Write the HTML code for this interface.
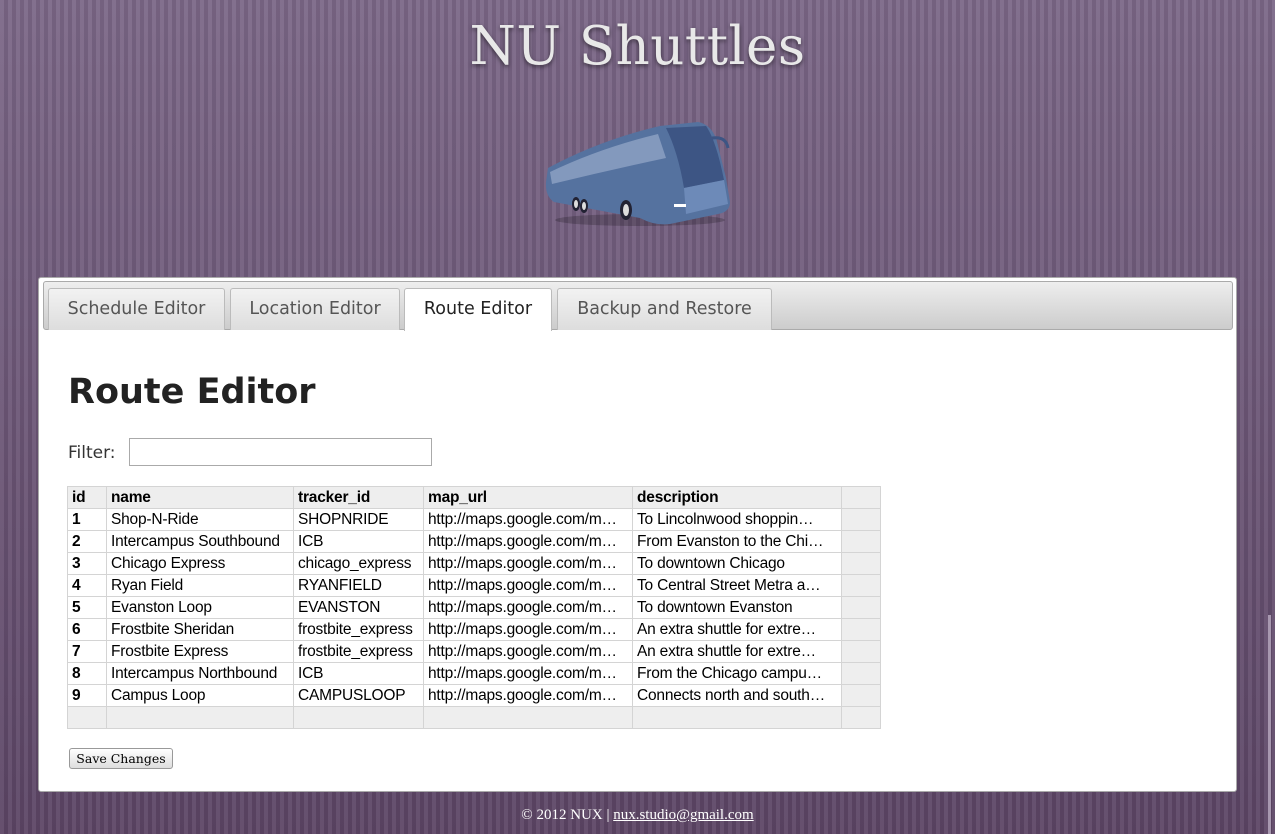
<!DOCTYPE html>
<html><head><meta charset="utf-8"><style>
*{box-sizing:border-box}
html,body{margin:0;padding:0}
body{width:1275px;height:834px;overflow:hidden;position:relative;
background:repeating-linear-gradient(90deg,rgba(255,255,255,0.06) 0 4px,rgba(0,0,0,0.06) 4px 8px),linear-gradient(#7b6787,#5c4565);
font-family:"Liberation Sans",sans-serif}
.title{position:absolute;top:16px;left:0;width:1275px;text-align:center;font-family:"DejaVu Serif","Liberation Serif",serif;font-size:53px;color:#e8e8e8;text-shadow:0 2px 4px rgba(0,0,0,.5);letter-spacing:0.5px}
.panel{position:absolute;left:38px;top:277px;width:1199px;height:515px;background:#fff;border:1px solid #aaa;border-radius:3px}
.tabbar{position:absolute;left:4px;top:3px;width:1190px;height:49px;background:linear-gradient(#eee,#ccc);border:1px solid #aaa;border-radius:3px}
.tab{position:absolute;top:6px;height:42px;background:linear-gradient(#f2f2f2,#ddd);border:1px solid #bbb;border-bottom:none;border-radius:3px 3px 0 0;font-family:"DejaVu Sans",sans-serif;font-size:17.5px;color:#555;text-align:center;line-height:40px}
.tab.a{background:#fff;color:#222;height:43px}
h1{position:absolute;left:29px;top:94px;margin:0;font-family:"DejaVu Sans",sans-serif;font-weight:bold;font-size:35px;color:#222}
.flt{position:absolute;left:29px;top:165px;font-family:"DejaVu Sans",sans-serif;font-size:17px;color:#333}
.inp{position:absolute;left:90px;top:160px;width:303px;height:28px;border:1px solid #aaa}
table{position:absolute;left:28px;top:208px;border-collapse:collapse;font-size:15.5px;color:#000;table-layout:fixed}
td{border:1px solid #d4d4d4;height:22px;padding:0 4px;white-space:nowrap;overflow:hidden;letter-spacing:-0.2px}
tr.h td{background:#eee;font-weight:bold}
td.g{background:#eee}
.btn{position:absolute;left:30px;top:470px;width:104px;height:21px;border:1px solid #999;border-radius:3px;background:linear-gradient(#fff,#ddd);font-family:"DejaVu Serif",serif;font-size:12.5px;text-align:center;line-height:19px}
.foot{position:absolute;top:807px;left:0;width:1275px;text-align:center;color:#fff;font-family:"Liberation Serif",serif;font-size:15px}
.foot u{color:#fff}
.sb{position:absolute;left:1268px;top:615px;width:3px;height:219px;background:#a898b0}
</style></head><body>
<div class="title">NU Shuttles</div>
<svg style="position:absolute;left:540px;top:118px" width="200" height="112" viewBox="0 0 200 112">
<ellipse cx="100" cy="102" rx="85" ry="6" fill="rgba(0,0,0,0.2)"/>
<path d="M8 50 Q60 22 120 8 L158 4 Q170 6 176 20 L186 60 L190 84 Q190 94 178 96 L130 106 Q115 108 100 100 L14 84 Q5 78 6 64Z" fill="#55729f"/>
<path d="M10 54 Q60 30 118 16 L126 40 Q70 52 12 66Z" fill="#8ea2c4" opacity=".8"/>
<path d="M126 10 L166 8 Q176 22 184 62 L144 70 Q138 34 126 10Z" fill="#3d5584"/>
<path d="M144 70 L184 62 L188 86 L146 96Z" fill="#6d8ab8"/>
<ellipse cx="36" cy="86" rx="4" ry="7" fill="#223"/><ellipse cx="36" cy="86" rx="2" ry="4" fill="#ddd"/>
<ellipse cx="44" cy="88" rx="4" ry="7" fill="#223"/><ellipse cx="44" cy="88" rx="2" ry="4" fill="#ddd"/>
<ellipse cx="86" cy="92" rx="6" ry="10" fill="#223"/><ellipse cx="86" cy="92" rx="3" ry="6" fill="#ddd"/>
<rect x="134" y="86" width="12" height="3" fill="#fff"/>
<path d="M172 20 Q186 18 188 30" stroke="#3d5584" stroke-width="3" fill="none"/>
</svg>
<div class="panel">
<div class="tabbar">
<div class="tab" style="left:4px;width:177px">Schedule Editor</div>
<div class="tab" style="left:186px;width:170px">Location Editor</div>
<div class="tab a" style="left:360px;width:148px">Route Editor</div>
<div class="tab" style="left:513px;width:215px">Backup and Restore</div>
</div>
<h1>Route Editor</h1>
<div class="flt">Filter:</div>
<div class="inp"></div>
<table>
<colgroup><col style="width:39px"><col style="width:187px"><col style="width:130px"><col style="width:209px"><col style="width:209px"><col style="width:39px"></colgroup>
<tr class="h"><td>id</td><td>name</td><td>tracker_id</td><td>map_url</td><td>description</td><td></td></tr>
<tr><td><b>1</b></td><td>Shop-N-Ride</td><td>SHOPNRIDE</td><td>http://maps.google.com/m…</td><td>To Lincolnwood shoppin…</td><td class="g"></td></tr>
<tr><td><b>2</b></td><td>Intercampus Southbound</td><td>ICB</td><td>http://maps.google.com/m…</td><td>From Evanston to the Chi…</td><td class="g"></td></tr>
<tr><td><b>3</b></td><td>Chicago Express</td><td>chicago_express</td><td>http://maps.google.com/m…</td><td>To downtown Chicago</td><td class="g"></td></tr>
<tr><td><b>4</b></td><td>Ryan Field</td><td>RYANFIELD</td><td>http://maps.google.com/m…</td><td>To Central Street Metra a…</td><td class="g"></td></tr>
<tr><td><b>5</b></td><td>Evanston Loop</td><td>EVANSTON</td><td>http://maps.google.com/m…</td><td>To downtown Evanston</td><td class="g"></td></tr>
<tr><td><b>6</b></td><td>Frostbite Sheridan</td><td>frostbite_express</td><td>http://maps.google.com/m…</td><td>An extra shuttle for extre…</td><td class="g"></td></tr>
<tr><td><b>7</b></td><td>Frostbite Express</td><td>frostbite_express</td><td>http://maps.google.com/m…</td><td>An extra shuttle for extre…</td><td class="g"></td></tr>
<tr><td><b>8</b></td><td>Intercampus Northbound</td><td>ICB</td><td>http://maps.google.com/m…</td><td>From the Chicago campu…</td><td class="g"></td></tr>
<tr><td><b>9</b></td><td>Campus Loop</td><td>CAMPUSLOOP</td><td>http://maps.google.com/m…</td><td>Connects north and south…</td><td class="g"></td></tr>
<tr><td class="g"></td><td class="g"></td><td class="g"></td><td class="g"></td><td class="g"></td><td class="g"></td></tr>
</table>
<div class="btn">Save Changes</div>
</div>
<div class="foot">© 2012 NUX | <u>nux.studio@gmail.com</u></div>
<div class="sb"></div>
</body></html>
